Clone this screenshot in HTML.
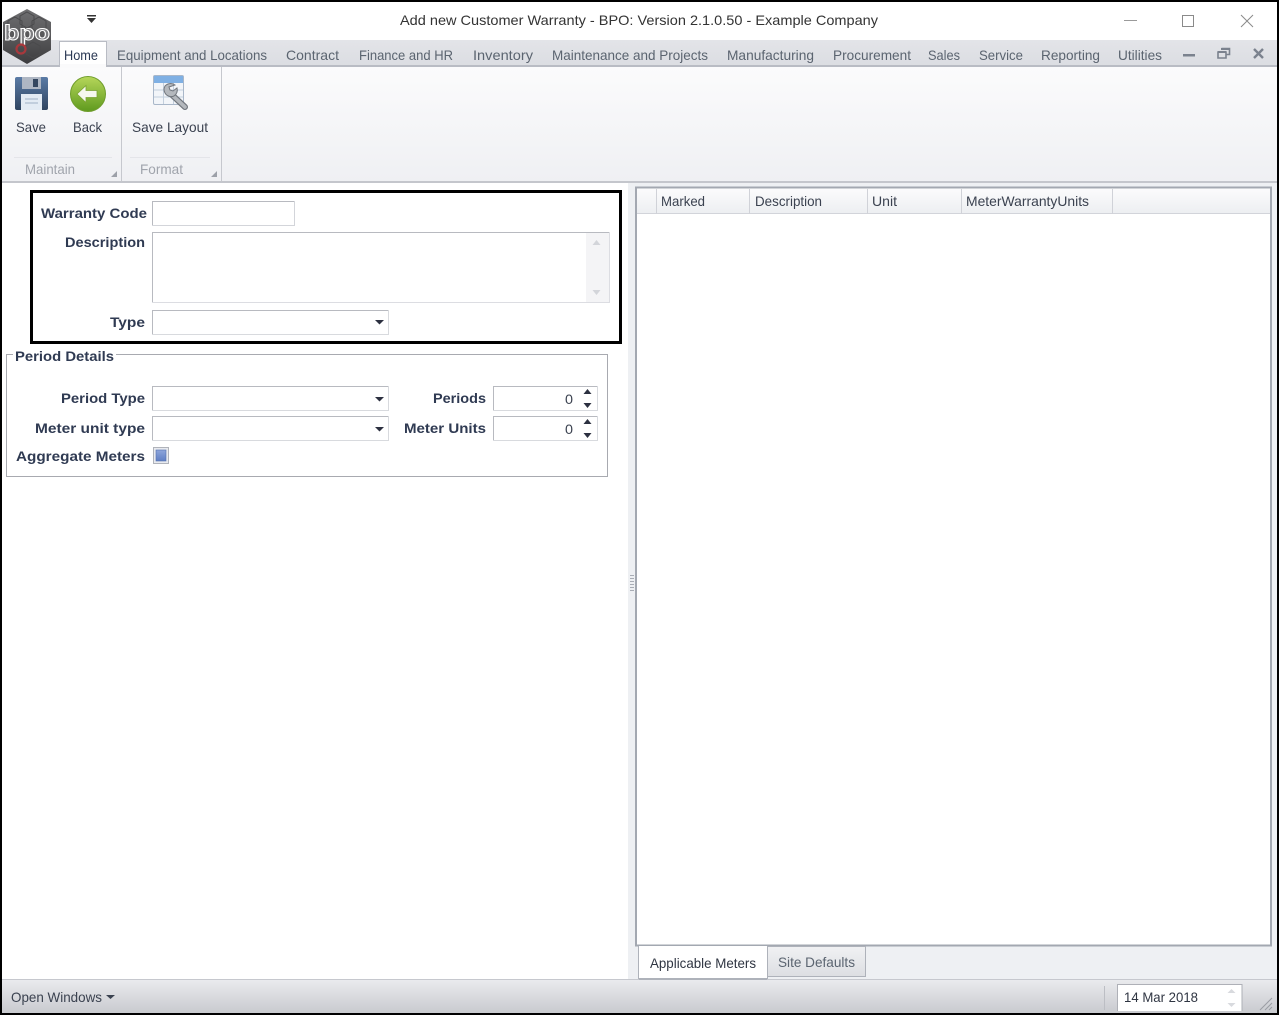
<!DOCTYPE html>
<html lang="en"><head><meta charset="utf-8"><title>Add new Customer Warranty</title>
<style>
html,body{margin:0;padding:0;background:#fff;width:1279px;height:1015px;overflow:hidden}
svg{display:block;filter:blur(0.3px)}
text{font-family:"Liberation Sans",Arial,sans-serif;font-size:14px}
.t{fill:#5b6470}
.n{fill:#3b4250}
.b{font-weight:bold;fill:#2f3a52}
.g{fill:#a0a4ac}
</style></head><body>
<svg xmlns="http://www.w3.org/2000/svg" width="1279" height="1015" viewBox="0 0 1279 1015">
<defs>
<linearGradient id="rib" x1="0" y1="0" x2="0" y2="1"><stop offset="0" stop-color="#fbfbfc"/><stop offset="1" stop-color="#eff0f3"/></linearGradient>
<linearGradient id="stat" x1="0" y1="0" x2="0" y2="1"><stop offset="0" stop-color="#e9eaed"/><stop offset="1" stop-color="#c8cacf"/></linearGradient>
<linearGradient id="hdr" x1="0" y1="0" x2="0" y2="1"><stop offset="0" stop-color="#fbfbfc"/><stop offset="1" stop-color="#eceef1"/></linearGradient>
<linearGradient id="site" x1="0" y1="0" x2="0" y2="1"><stop offset="0" stop-color="#f0f1f3"/><stop offset="1" stop-color="#dcdee2"/></linearGradient>
<linearGradient id="green" x1="0" y1="0" x2="0" y2="1"><stop offset="0" stop-color="#b6d65a"/><stop offset="1" stop-color="#5f9a1e"/></linearGradient>
<linearGradient id="fl" x1="0" y1="0" x2="0" y2="1"><stop offset="0" stop-color="#5a7ba6"/><stop offset="1" stop-color="#2f4460"/></linearGradient>
<linearGradient id="chk" x1="0" y1="0" x2="0" y2="1"><stop offset="0" stop-color="#8ea6dc"/><stop offset="1" stop-color="#5f7fc4"/></linearGradient>
<linearGradient id="tb" x1="0" y1="0" x2="0" y2="1"><stop offset="0" stop-color="#e3e4e8"/><stop offset="1" stop-color="#dbdde2"/></linearGradient>
<linearGradient id="hex" x1="0" y1="0" x2="0" y2="1"><stop offset="0" stop-color="#6e6e70"/><stop offset="0.55" stop-color="#555557"/><stop offset="1" stop-color="#3c3c3e"/></linearGradient>
</defs>
<rect width="1279" height="1015" fill="#fff"/>

<!-- tab strip -->
<rect x="2" y="40" width="1275" height="26" fill="url(#tb)"/>
<rect x="2" y="65" width="1275" height="2" fill="#b9bcc4"/>
<!-- ribbon -->
<rect x="2" y="67" width="1275" height="114" fill="url(#rib)"/>
<rect x="2" y="181" width="1275" height="2" fill="#c4c6cc"/>
<rect x="121" y="67" width="1" height="114" fill="#c6c8ce"/>
<rect x="221" y="67" width="1" height="114" fill="#c6c8ce"/>
<rect x="14" y="157" width="98" height="1" fill="#e4e5e9"/>
<rect x="130" y="157" width="80" height="1" fill="#e4e5e9"/>
<path d="M117 171v6h-6zM217 171v6h-6z" fill="#9da1a9"/>
<!-- home tab -->
<path d="M59.500 67V41.500H106.500V67" fill="#fff" stroke="#b9bcc4"/>
<rect x="60" y="64" width="46" height="4" fill="#fafafb"/>

<!-- logo -->
<polygon points="27,9 51,22 51,50 27,64 3,50 3,22" fill="url(#hex)"/>
<path d="M15 17l7 4v8l-7 4-7-4v-8zM27 12l7 4v8l-7 4-7-4v-8zM39 17l7 4v8l-7 4-7-4v-8zM33 42l7 4v8l-7 4-7-4v-8z" fill="none" stroke="#4a4a4c" stroke-width="1"/>
<text x="4" y="40" textLength="46" lengthAdjust="spacingAndGlyphs" style="font-size:21px;font-weight:bold" fill="#7d7d80" stroke="#fff" stroke-width="1">bpo</text>
<circle cx="21" cy="49" r="4.500" fill="none" stroke="#a8383c" stroke-width="2.200"/>

<!-- QAT arrow -->
<rect x="87" y="15" width="9" height="1.500" fill="#333"/>
<path d="M87 18h9l-4.500 5z" fill="#333"/>

<!-- title -->
<text x="400" y="25" textLength="478" lengthAdjust="spacingAndGlyphs" fill="#333">Add new Customer Warranty - BPO: Version 2.1.0.50 - Example Company</text>

<!-- window buttons -->
<rect x="1124" y="20" width="13" height="1" fill="#9a9a9a"/>
<rect x="1182.500" y="15.500" width="11" height="11" fill="none" stroke="#8a8a8a"/>
<path d="M1241 15l12 12M1253 15l-12 12" stroke="#8a8a8a" stroke-width="1"/>

<!-- tabs -->
<text x="64" y="60" textLength="34" lengthAdjust="spacingAndGlyphs" fill="#2c3a55">Home</text>
<text class="t" x="117" y="60" textLength="150" lengthAdjust="spacingAndGlyphs">Equipment and Locations</text>
<text class="t" x="286" y="60" textLength="53" lengthAdjust="spacingAndGlyphs">Contract</text>
<text class="t" x="359" y="60" textLength="94" lengthAdjust="spacingAndGlyphs">Finance and HR</text>
<text class="t" x="473" y="60" textLength="60" lengthAdjust="spacingAndGlyphs">Inventory</text>
<text class="t" x="552" y="60" textLength="156" lengthAdjust="spacingAndGlyphs">Maintenance and Projects</text>
<text class="t" x="727" y="60" textLength="87" lengthAdjust="spacingAndGlyphs">Manufacturing</text>
<text class="t" x="833" y="60" textLength="78" lengthAdjust="spacingAndGlyphs">Procurement</text>
<text class="t" x="928" y="60" textLength="32" lengthAdjust="spacingAndGlyphs">Sales</text>
<text class="t" x="979" y="60" textLength="44" lengthAdjust="spacingAndGlyphs">Service</text>
<text class="t" x="1041" y="60" textLength="59" lengthAdjust="spacingAndGlyphs">Reporting</text>
<text class="t" x="1118" y="60" textLength="44" lengthAdjust="spacingAndGlyphs">Utilities</text>

<!-- MDI buttons -->
<rect x="1183" y="54" width="12" height="2.500" fill="#7b828e"/>
<path d="M1221.500 48.500h8v6h-3M1218 52h8v6h-8z" fill="none" stroke="#7b828e" stroke-width="1.600"/>
<rect x="1221" y="48" width="9" height="2" fill="#7b828e"/><rect x="1218" y="51" width="8" height="2" fill="#7b828e"/>
<path d="M1254 49l9 9M1263 49l-9 9" stroke="#7b828e" stroke-width="2.400"/>

<!-- save icon -->
<path d="M15 79a2 2 0 0 1 2-2h29a2 2 0 0 1 2 2v29a2 2 0 0 1-2 2h-29a2 2 0 0 1-2-2z" fill="url(#fl)"/>
<rect x="22" y="77" width="19" height="12" fill="#aeb6c3"/>
<rect x="33" y="79" width="5" height="8" fill="#34465f"/>
<rect x="21" y="94" width="21" height="16" fill="#e3ebf4"/>
<path d="M25 99h13M25 103h13" stroke="#9fb0c6" stroke-width="1"/>

<!-- back icon -->
<circle cx="88" cy="94" r="17.500" fill="url(#green)" stroke="#6f9d2c"/>
<path d="M77 94l9-8.500v5h11v7h-11v5z" fill="#f6f8ee" stroke="#7ba333" stroke-width="0.800"/>

<!-- save layout icon -->
<rect x="153.500" y="75.500" width="30" height="29" rx="1.500" fill="#f2f5f9" stroke="#a9b7c9"/>
<rect x="154" y="76" width="29" height="7" fill="#7fb0e4"/>
<path d="M154 90h29M154 97h29M163.500 83v21M173.500 83v21" stroke="#c3cfdd" stroke-width="1"/>
<path d="M171 94L185 107" stroke="#71767d" stroke-width="6" stroke-linecap="round"/>
<path d="M171 94L185 107" stroke="#b4b8bd" stroke-width="3.600" stroke-linecap="round"/>
<path d="M175 85a7.500 7.500 0 0 0-10 1 7 7 0 0 0 0 7 7 7 0 0 0 9 3 7 7 0 0 0 3-8l-4 3-3-1-1-3z" fill="#b4b8bd" stroke="#71767d" stroke-width="1"/>

<!-- ribbon labels -->
<text class="n" x="16" y="132" textLength="30" lengthAdjust="spacingAndGlyphs">Save</text>
<text class="n" x="73" y="132" textLength="29" lengthAdjust="spacingAndGlyphs">Back</text>
<text class="n" x="132" y="132" textLength="76" lengthAdjust="spacingAndGlyphs">Save Layout</text>
<text class="g" x="25" y="174" textLength="50" lengthAdjust="spacingAndGlyphs">Maintain</text>
<text class="g" x="140" y="174" textLength="43" lengthAdjust="spacingAndGlyphs">Format</text>

<!-- highlight box -->
<rect x="31.500" y="191.500" width="589" height="151" fill="none" stroke="#000" stroke-width="3"/>

<!-- form -->
<text class="b" x="41" y="218" textLength="106" lengthAdjust="spacingAndGlyphs">Warranty Code</text>
<rect x="152.500" y="201.500" width="142" height="24" fill="#fff" stroke="#d3d5da"/>
<path d="M152.500 225V201.500H294" fill="none" stroke="#b8bac0"/>
<text class="b" x="65" y="247" textLength="80" lengthAdjust="spacingAndGlyphs">Description</text>
<rect x="152.500" y="232.500" width="457" height="70" fill="#fff" stroke="#dcdde2"/>
<path d="M152.500 302V232.500H609" fill="none" stroke="#b8bac0"/>
<rect x="586" y="233" width="23" height="69" fill="#f4f4f6"/>
<path d="M596.500 240l4 5h-8zM596.500 295l4-5h-8z" fill="#d3d5da"/>
<text class="b" x="110" y="327" textLength="35" lengthAdjust="spacingAndGlyphs">Type</text>
<rect x="152.500" y="310.500" width="236" height="24" fill="#fff" stroke="#d8dade"/>
<path d="M152.500 334V310.500H388" fill="none" stroke="#b8bac0"/>
<path d="M375 320h9l-4.500 4.500z" fill="#2c3040"/>

<!-- group -->
<rect x="6.500" y="354.500" width="601" height="122" fill="none" stroke="#a8aab0"/>
<rect x="13" y="350" width="103" height="10" fill="#fff"/>
<text class="b" x="15" y="361" textLength="99" lengthAdjust="spacingAndGlyphs">Period Details</text>

<text class="b" x="61" y="403" textLength="84" lengthAdjust="spacingAndGlyphs">Period Type</text>
<rect x="152.500" y="386.500" width="236" height="24" fill="#fff" stroke="#d8dade"/>
<path d="M152.500 410V386.500H388" fill="none" stroke="#b8bac0"/>
<path d="M375 397h9l-4.500 4.500z" fill="#2c3040"/>
<text class="b" x="35" y="433" textLength="110" lengthAdjust="spacingAndGlyphs">Meter unit type</text>
<rect x="152.500" y="416.500" width="236" height="24" fill="#fff" stroke="#d8dade"/>
<path d="M152.500 440V416.500H388" fill="none" stroke="#b8bac0"/>
<path d="M375 427h9l-4.500 4.500z" fill="#2c3040"/>
<text class="b" x="16" y="461" textLength="129" lengthAdjust="spacingAndGlyphs">Aggregate Meters</text>
<rect x="153.500" y="447.500" width="15" height="16" fill="#e8eaef" stroke="#b0b3ba"/>
<rect x="156" y="450" width="10" height="11" fill="url(#chk)" stroke="#5470ad" stroke-width="0.600"/>

<text class="b" x="433" y="403" textLength="53" lengthAdjust="spacingAndGlyphs">Periods</text>
<rect x="493.500" y="386.500" width="104" height="24" fill="#fff" stroke="#d8dade"/>
<path d="M493.500 410V386.500H597" fill="none" stroke="#b8bac0"/>
<text class="n" x="565" y="404" textLength="8" lengthAdjust="spacingAndGlyphs">0</text>
<path d="M587.500 389l4 5h-8zM587.500 408l4-5h-8z" fill="#2c3040"/>
<text class="b" x="404" y="433" textLength="82" lengthAdjust="spacingAndGlyphs">Meter Units</text>
<rect x="493.500" y="416.500" width="104" height="24" fill="#fff" stroke="#d8dade"/>
<path d="M493.500 440V416.500H597" fill="none" stroke="#b8bac0"/>
<text class="n" x="565" y="434" textLength="8" lengthAdjust="spacingAndGlyphs">0</text>
<path d="M587.500 419l4 5h-8zM587.500 438l4-5h-8z" fill="#2c3040"/>

<!-- right panel -->
<rect x="628" y="183" width="649" height="797" fill="#eef0f3"/>
<g fill="#a9adb5"><rect x="630" y="575" width="4" height="1"/><rect x="630" y="578" width="4" height="1"/><rect x="630" y="581" width="4" height="1"/><rect x="630" y="584" width="4" height="1"/><rect x="630" y="587" width="4" height="1"/><rect x="630" y="590" width="4" height="1"/></g>
<rect x="636" y="187.500" width="635" height="758" fill="#fff" stroke="#a3a8b1" stroke-width="2"/>
<rect x="637" y="189" width="633" height="25" fill="url(#hdr)"/>
<rect x="637" y="213" width="633" height="1" fill="#d2d4da"/>
<g fill="#d0d2d8"><rect x="656" y="189" width="1" height="25"/><rect x="749" y="189" width="1" height="25"/><rect x="867" y="189" width="1" height="25"/><rect x="961" y="189" width="1" height="25"/><rect x="1112" y="189" width="1" height="25"/></g>
<text class="n" x="661" y="206" textLength="44" lengthAdjust="spacingAndGlyphs">Marked</text>
<text class="n" x="755" y="206" textLength="67" lengthAdjust="spacingAndGlyphs">Description</text>
<text class="n" x="872" y="206" textLength="25" lengthAdjust="spacingAndGlyphs">Unit</text>
<text class="n" x="966" y="206" textLength="123" lengthAdjust="spacingAndGlyphs">MeterWarrantyUnits</text>

<!-- bottom tabs -->
<path d="M767.500 946.500H865.500V976.500H767.500z" fill="url(#site)" stroke="#aeb2ba"/>
<path d="M638.500 946V978.500H767.500V946" fill="#fff" stroke="#aeb2ba"/>
<text x="650" y="968" textLength="106" lengthAdjust="spacingAndGlyphs" fill="#2f3542">Applicable Meters</text>
<text class="t" x="778" y="967" textLength="77" lengthAdjust="spacingAndGlyphs">Site Defaults</text>

<!-- status bar -->
<rect x="2" y="980" width="1275" height="33" fill="url(#stat)"/>
<rect x="2" y="979" width="1275" height="1" fill="#c6c8ce"/>
<rect x="639" y="979" width="128" height="1" fill="#aeb2ba"/>
<text class="n" x="11" y="1002" textLength="91" lengthAdjust="spacingAndGlyphs">Open Windows</text>
<path d="M106 995h9l-4.500 4z" fill="#3b4250"/>
<rect x="1104" y="986" width="1" height="24" fill="#bcbec4"/>
<rect x="1118" y="985" width="124" height="26" fill="#fff"/>
<path d="M1117.500 1011V984.500H1242V1011" fill="none" stroke="#aeb0b7"/>
<text x="1124" y="1002" textLength="74" lengthAdjust="spacingAndGlyphs" fill="#2f3542">14 Mar 2018</text>
<path d="M1231.500 989l4 4h-8zM1231.500 1007l4-4h-8z" fill="#d8dade"/>
<path d="M1260 1010l12-12M1265 1010l7-7M1269 1010l3-3" stroke="#9a9da4" stroke-width="1" fill="none"/>

<!-- outer border -->
<rect x="1" y="1" width="1277" height="1013" fill="none" stroke="#000" stroke-width="2"/>
</svg>
</body></html>
